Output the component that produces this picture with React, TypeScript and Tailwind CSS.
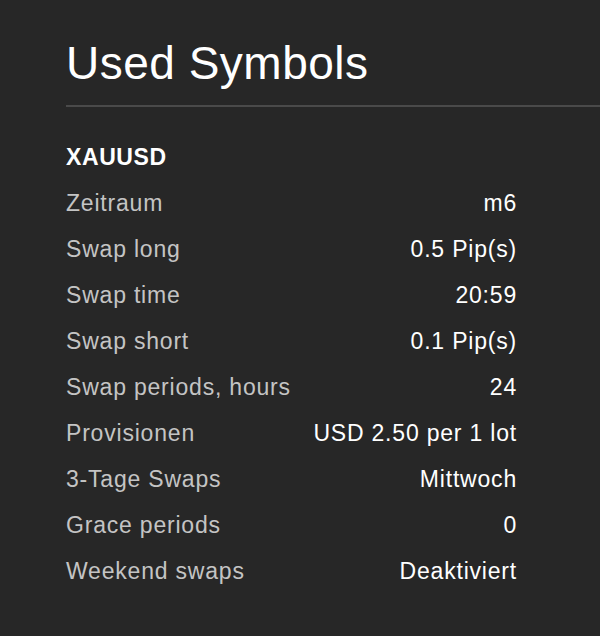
const rows: [string, string][] = [
  ['Zeitraum', 'm6'],
  ['Swap long', '0.5 Pip(s)'],
  ['Swap time', '20:59'],
  ['Swap short', '0.1 Pip(s)'],
  ['Swap periods, hours', '24'],
  ['Provisionen', 'USD 2.50 per 1 lot'],
  ['3-Tage Swaps', 'Mittwoch'],
  ['Grace periods', '0'],
  ['Weekend swaps', 'Deaktiviert'],
]

export default function App() {
  return (
    <div className="min-h-[636px] w-[600px] bg-[#272727] pl-[66px] pt-[37px] font-['Liberation_Sans',Arial,sans-serif]">
      {/* Header */}
      <h1 className="text-[46px] leading-[52px] text-white tracking-[0.5px]">Used Symbols</h1>
      <div className="mt-[16px] h-[2px] bg-[#4a4a4a]" />

      {/* Symbol details */}
      <div className="w-[451px] pt-[36px]">
        <h2 className="text-[23px] leading-[28px] font-bold text-white tracking-[0.6px]">XAUUSD</h2>
        <div className="mt-[9px] flex flex-col">
          {rows.map(([label, value]) => (
            <div key={label} className="flex h-[46px] items-center justify-between text-[23px] tracking-[0.8px]">
              <span className="text-[#c4c4c4]">{label}</span>
              <span className="text-white">{value}</span>
            </div>
          ))}
        </div>
      </div>
    </div>
  )
}
